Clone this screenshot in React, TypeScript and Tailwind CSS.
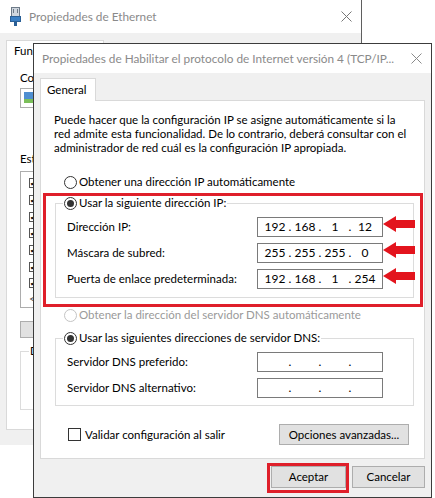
import React from "react"
import clsx from "clsx"

const Radio = ({ checked, disabled }: { checked?: boolean; disabled?: boolean }) => (
  <span
    className={clsx(
      "flex h-[13px] w-[13px] shrink-0 items-center justify-center rounded-full border bg-white",
      disabled ? "border-[#c4c4c4]" : "border-[#333333]"
    )}
  >
    {checked && <span className="h-[7px] w-[7px] rounded-full bg-[#333333]" />}
  </span>
)

const IpBox = ({ parts }: { parts: string[] }) => (
  <div className="flex h-[20px] w-[126px] shrink-0 items-center border border-[#7a7a7a] bg-white pl-[6px] text-[12px] leading-none">
    {parts.map((p, i) => (
      <React.Fragment key={i}>
        <span className="w-[22px] text-center">{p}</span>
        {i < 3 && <span className="w-[8px] text-center">.</span>}
      </React.Fragment>
    ))}
  </div>
)

const Arrow = ({ top }: { top: number }) => (
  <svg className="absolute left-[383px] z-20" style={{ top }} width="33" height="18" viewBox="0 0 33 18">
    <polygon points="0,9 13,1 13,5 32,5 32,13 13,13 13,17" fill="#e3141d" />
  </svg>
)

const Button = ({ label, className }: { label: string; className?: string }) => (
  <div
    className={clsx(
      "flex items-center justify-center whitespace-nowrap border border-[#adadad] bg-[#e1e1e1] text-black",
      className
    )}
  >
    {label}
  </div>
)

const CloseX = ({ color }: { color: string }) => (
  <svg width="11" height="11" viewBox="0 0 11 11">
    <path d="M0.5 0.5 L10.5 10.5 M10.5 0.5 L0.5 10.5" stroke={color} strokeWidth="1" />
  </svg>
)

// the "Propiedades de Ethernet" window sitting behind
const BackWindow = () => (
  <div className="absolute left-0 top-0 z-0 h-[445px] w-[362px] border-r border-[#5f5f5f] bg-[#f0f0f0]">
    <div className="flex h-[33px] items-center bg-white pl-[10px] pr-[9px]">
      <svg width="11" height="19" viewBox="0 0 11 19">
        <rect x="1.5" y="0.5" width="8" height="9" fill="#cfd6de" stroke="#6d7a88" />
        <rect x="3" y="2" width="1" height="4" fill="#6d7a88" />
        <rect x="7" y="2" width="1" height="4" fill="#6d7a88" />
        <rect x="0.5" y="9.5" width="10" height="5" fill="#3a7fc4" stroke="#2a5f96" />
        <rect x="4" y="15" width="3" height="4" fill="#2a5f96" />
      </svg>
      <span className="ml-[8px] whitespace-nowrap text-[11.8px] text-[#8a8a8a]">Propiedades de Ethernet</span>
      <span className="ml-auto flex">
        <CloseX color="#777777" />
      </span>
    </div>
    <div className="pl-[6px] pr-[6px] pt-[7px]">
      <div className="relative z-10 -mb-px flex h-[21px] w-[98px] items-center whitespace-nowrap border border-b-0 border-[#d9d9d9] bg-white pl-[7px]">
        Funciones de red
      </div>
      <div className="h-[370px] border border-[#d9d9d9] bg-white pl-[13px] pt-[10px]">
        <div className="whitespace-nowrap leading-[14px]">Conectar con:</div>
        <div className="mt-[3px] flex h-[20px] w-[300px] items-center border border-[#adadad] pl-[3px]">
          <svg width="10" height="12" viewBox="0 0 10 12">
            <rect x="0" y="0" width="9" height="7" fill="#4f8ed0" />
            <rect x="0" y="7" width="9" height="4" fill="#7bbf5a" />
          </svg>
        </div>
        <div className="mt-[44px] whitespace-nowrap leading-[14px]">Esta conexión usa los siguientes elementos:</div>
        <div className="mt-[5px] h-[137px] w-[320px] border border-[#adadad] pl-[8px] pt-[3px]">
          {[0, 1, 2, 3, 4, 5, 6].map((i) => (
            <div key={i} className="flex h-[16.7px] items-center">
              <span className="h-[10px] w-[10px] border border-[#555555] bg-white text-[8px] leading-[8px]">✔</span>
            </div>
          ))}
          <div className="leading-[14px] text-[#555555]">&lt;</div>
        </div>
        <div className="mt-[13px] h-[17px] w-[90px] border border-[#adadad] bg-[#e1e1e1]" />
        <fieldset className="mt-[6px] h-[66px] w-[320px] border border-[#dcdcdc] pl-[8px]">
          <legend className="px-[1px] leading-[14px]">Descripción</legend>
        </fieldset>
      </div>
    </div>
  </div>
)

const App = () => {
  return (
    <div className="relative h-[498px] w-[435px] overflow-hidden bg-white font-['Lato',sans-serif] text-[11.5px] text-black">
      <BackWindow />

      {/* dialogo IPv4 */}
      <div className="absolute left-[33px] top-[43px] z-10 flex h-[455px] w-[399px] flex-col border border-[#3c3c3c] bg-[#f0f0f0]">
        <div className="flex h-[29px] shrink-0 items-center bg-white pl-[8px] pr-[9px]">
          <span className="whitespace-nowrap text-[11.8px] text-[#8a8a8a]">
            Propiedades de Habilitar el protocolo de Internet versión 4 (TCP/IP...
          </span>
          <span className="ml-auto flex">
            <CloseX color="#8a8a8a" />
          </span>
        </div>

        <div className="px-[6px] pt-[5px]">
          <div className="relative z-10 -mb-px flex h-[23px] w-[56px] items-center border border-b-0 border-[#d9d9d9] bg-white pl-[6px]">
            General
          </div>
          <div className="h-[359px] border border-[#d9d9d9] bg-white">
            <p className="ml-[13px] mt-[12px] whitespace-nowrap leading-[14px]">
              Puede hacer que la configuración IP se asigne automáticamente si la
              <br />
              red admite esta funcionalidad. De lo contrario, deberá consultar con el
              <br />
              administrador de red cuál es la configuración IP apropiada.
            </p>

            <div className="ml-[23px] mt-[20px] flex h-[14px] items-center gap-[2px] whitespace-nowrap">
              <Radio />
              <span>Obtener una dirección IP automáticamente</span>
            </div>

            <fieldset className="ml-[14px] mt-[7px] w-[359px] border border-[#dcdcdc] pb-[8px] pl-[11px]">
              <legend className="-ml-[4px] flex h-[14px] items-center gap-[2px] whitespace-nowrap px-[1px]">
                <Radio checked />
                <span>Usar la siguiente dirección IP:</span>
              </legend>
              <div className="mt-[7px] flex flex-col gap-[6px]">
                <div className="flex items-center">
                  <span className="w-[190px] whitespace-nowrap">Dirección IP:</span>
                  <IpBox parts={["192", "168", "1", "12"]} />
                </div>
                <div className="flex items-center">
                  <span className="w-[190px] whitespace-nowrap">Máscara de subred:</span>
                  <IpBox parts={["255", "255", "255", "0"]} />
                </div>
                <div className="flex items-center">
                  <span className="w-[190px] whitespace-nowrap">Puerta de enlace predeterminada:</span>
                  <IpBox parts={["192", "168", "1", "254"]} />
                </div>
              </div>
            </fieldset>

            <div className="ml-[23px] mt-[10px] flex h-[14px] items-center gap-[2px] whitespace-nowrap text-[#9a9a9a]">
              <Radio disabled />
              <span>Obtener la dirección del servidor DNS automáticamente</span>
            </div>

            <fieldset className="ml-[14px] mt-[9px] w-[359px] border border-[#dcdcdc] pb-[7px] pl-[11px]">
              <legend className="-ml-[4px] flex h-[14px] items-center gap-[2px] whitespace-nowrap px-[1px]">
                <Radio checked />
                <span>Usar las siguientes direcciones de servidor DNS:</span>
              </legend>
              <div className="mt-[7px] flex flex-col gap-[6px]">
                <div className="flex items-center">
                  <span className="w-[190px] whitespace-nowrap">Servidor DNS preferido:</span>
                  <IpBox parts={["", "", "", ""]} />
                </div>
                <div className="flex items-center">
                  <span className="w-[190px] whitespace-nowrap">Servidor DNS alternativo:</span>
                  <IpBox parts={["", "", "", ""]} />
                </div>
              </div>
            </fieldset>

            <div className="mt-[18px] flex items-center justify-between pl-[27px] pr-[15px]">
              <div className="flex items-center gap-[4px] whitespace-nowrap">
                <span className="h-[13px] w-[13px] border border-[#333333] bg-white" />
                <span>Validar configuración al salir</span>
              </div>
              <Button label="Opciones avanzadas..." className="h-[21px] w-[130px]" />
            </div>
          </div>

          <div className="mt-[7px] flex justify-end gap-[6px]">
            <Button label="Aceptar" className="h-[22px] w-[75px]" />
            <Button label="Cancelar" className="h-[22px] w-[73px]" />
          </div>
        </div>
      </div>

      {/* marcas rojas */}
      <div className="absolute left-[43px] top-[193px] z-20 h-[114px] w-[380px] border-[3px] border-[#df1f2a]" />
      <Arrow top={215} />
      <Arrow top={241} />
      <Arrow top={267} />
      <div className="absolute left-[267px] top-[463px] z-20 h-[30px] w-[82px] border-[3px] border-[#df1f2a]" />
    </div>
  )
}

export default App
